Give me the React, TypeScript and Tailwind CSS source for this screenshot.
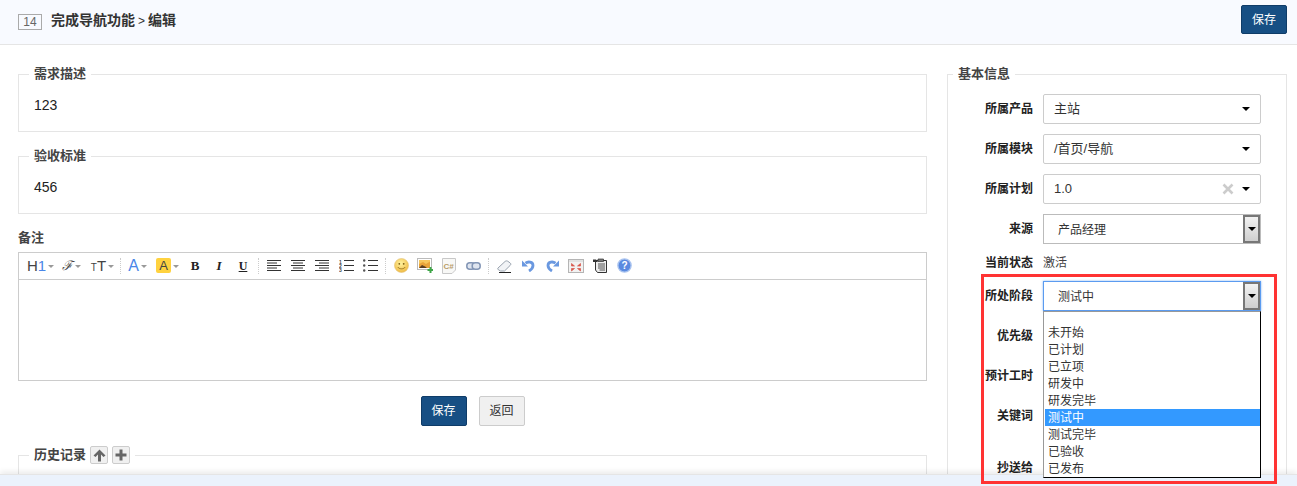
import React from 'react';

const stages = ['未开始', '已计划', '已立项', '研发中', '研发完毕', '测试中', '测试完毕', '已验收', '已发布'];

function Caret({ className = 'border-t-black' }: { className?: string }) {
    return <span className={`inline-block w-0 h-0 border-x-[4px] border-x-transparent border-t-[4px] ${className}`} />;
}

function MiniCaret() {
    return <span className="ml-[2px] mt-[2px] inline-block w-0 h-0 border-x-[3px] border-x-transparent border-t-[3px] border-t-[#999]" />;
}

function Sep({ narrow }: { narrow?: boolean }) {
    return <div className={`${narrow ? 'w-[5px]' : 'w-[7px]'} h-full flex justify-center items-center`}><div className="h-[16px] border-l border-dotted border-[#ccc]" /></div>;
}

function Tool({ children, className = 'w-[24px]' }: { children: React.ReactNode; className?: string }) {
    return <div className={`${className} h-full flex items-center justify-center`}>{children}</div>;
}

function Lines({ align }: { align: 'left' | 'center' | 'right' }) {
    const short = align === 'left' ? 'M0 3H10M0 8H10' : align === 'center' ? 'M2 3H12M2 8H12' : 'M4 3H14M4 8H14';
    return (
        <svg width="14" height="11" viewBox="0 0 14 11" stroke="#333" strokeWidth="1">
            <path d="M0 .5H14M0 5.5H14M0 10.5H14" />
            <path d={short} />
        </svg>
    );
}

function FormRow({ label, children, className = 'h-[30px] mb-[10px]' }: { label: string; children?: React.ReactNode; className?: string }) {
    return (
        <div className={`flex items-center ${className}`}>
            <div className="w-[85px] text-right text-[12px] font-bold text-[#222]">{label}</div>
            {children && <div className="ml-[10px] w-[218px] h-full">{children}</div>}
        </div>
    );
}

function SelectBox({ value, clearable }: { value: string; clearable?: boolean }) {
    return (
        <div className="h-full border border-[#ccc] rounded-[2px] flex items-center pl-[10px] pr-[10px] text-[13px] text-[#333]">
            <span className="flex-1">{value}</span>
            {clearable && (
                <svg width="12" height="12" viewBox="0 0 12 12" stroke="#ccc" strokeWidth="2.6" className="mr-[8px]">
                    <path d="M1.5 1.5L10.5 10.5M10.5 1.5L1.5 10.5" />
                </svg>
            )}
            <Caret />
        </div>
    );
}

function NativeSelect({ value, focused }: { value: string; focused?: boolean }) {
    return (
        <div className={`h-full flex items-center pl-[14px] text-[12px] text-[#333] bg-white border ${focused ? 'border-[#5b9bf0] shadow-[0_0_2px_rgba(80,150,240,0.7)]' : 'border-[#bbb]'}`}>
            <span className="flex-1 pt-[2px]">{value}</span>
            <div className="w-[17px] h-full border-2 border-[#777] bg-gradient-to-b from-[#f2f2f2] to-[#cfcfcf] flex items-center justify-center">
                <Caret />
            </div>
        </div>
    );
}

export default function App() {
    return (
        <div className="relative h-[486px] overflow-hidden bg-white text-[13px] text-[#333] font-['Liberation_Sans','Noto_Sans_CJK_SC',sans-serif]">
            <header className="h-[45px] bg-[#f8faff] border-b border-[#e5e5e5] pl-[18px] pr-[10px] flex items-center">
                <span className="w-[24px] h-[16px] border border-[#aaa] text-[12px] leading-[14px] text-center text-[#666]">14</span>
                <span className="ml-[9px] text-[14px] font-bold text-[#333] flex-1 mb-[3px] flex items-center">
                    完成导航功能<span className="mx-[3px] text-[12px] font-normal">&gt;</span>编辑
                </span>
                <button className="w-[46px] h-[29px] mb-[5px] bg-[#174f84] border border-[#0f3c68] rounded-[2px] text-[12px] text-white">保存</button>
            </header>

            <main className="flex pl-[18px] pr-[10px] pt-[20px]">
                <div className="w-[909px]">
                    <fieldset className="border border-[#e5e5e5]">
                        <legend className="ml-[10px] px-[5px] text-[13px] leading-[18px] font-bold text-[#444]">需求描述</legend>
                        <div className="h-[48px] pl-[15px] pt-[13px] text-[14px] leading-[18px] text-[#222]">123</div>
                    </fieldset>
                    <fieldset className="mt-[15px] border border-[#e5e5e5]">
                        <legend className="ml-[10px] px-[5px] text-[13px] leading-[18px] font-bold text-[#444]">验收标准</legend>
                        <div className="h-[48px] pl-[15px] pt-[13px] text-[14px] leading-[18px] text-[#222]">456</div>
                    </fieldset>

                    <div className="mt-[15px] mb-[5px] text-[13px] leading-[18px] font-bold text-[#444]">备注</div>
                    <div className="h-[129px] border border-[#ccc]">
                        <div className="h-[27px] pl-[6px] pb-[1px] border-b border-[#ccc] flex items-center text-[#444]">
                            <Tool className="w-[31px]"><span className="text-[15px] leading-none">H<span className="text-[#4a86e8]">1</span></span><MiniCaret /></Tool>
                            <Tool className="w-[31px]"><span className="text-[13px] leading-none italic font-['DejaVu_Serif',serif]">ℱ</span><MiniCaret /></Tool>
                            <Tool className="w-[31px]"><span className="text-[15px] leading-none"><span className="text-[10px]">T</span>T</span><MiniCaret /></Tool>
                            <Sep narrow />
                            <Tool className="w-[29px]"><span className="text-[16px] leading-none text-[#4a86e8]">A</span><MiniCaret /></Tool>
                            <Tool className="w-[31px]"><span className="w-[15px] h-[15px] rounded-[2px] bg-[#ffd23f] text-[13px] leading-[15px] text-center text-[#444]">A</span><MiniCaret /></Tool>
                            <Tool><span className="text-[13px] font-bold text-[#222] font-['Liberation_Serif',serif]">B</span></Tool>
                            <Tool><span className="text-[13px] font-bold italic text-[#222] font-['Liberation_Serif',serif]">I</span></Tool>
                            <Tool><span className="text-[12px] font-bold underline text-[#222] font-['Liberation_Serif',serif]">U</span></Tool>
                            <Sep />
                            <Tool><Lines align="left" /></Tool>
                            <Tool><Lines align="center" /></Tool>
                            <Tool><Lines align="right" /></Tool>
                            <Tool>
                                <svg width="15" height="13" viewBox="0 0 15 13">
                                    <path d="M5 1.5H15M5 6.5H15M5 11.5H15" stroke="#333" />
                                    <text x="0" y="4.5" fontSize="5" fontWeight="700" fill="#444" fontFamily="Liberation Sans">1</text>
                                    <text x="0" y="9" fontSize="5" fontWeight="700" fill="#444" fontFamily="Liberation Sans">2</text>
                                    <text x="0" y="13" fontSize="5" fontWeight="700" fill="#444" fontFamily="Liberation Sans">3</text>
                                </svg>
                            </Tool>
                            <Tool>
                                <svg width="15" height="13" viewBox="0 0 15 13">
                                    <path d="M5 1.5H15M5 6.5H15M5 11.5H15" stroke="#333" />
                                    <circle cx="1.2" cy="1.5" r="1.2" fill="#555" />
                                    <circle cx="1.2" cy="6.5" r="1.2" fill="#555" />
                                    <circle cx="1.2" cy="11.5" r="1.2" fill="#555" />
                                </svg>
                            </Tool>
                            <Sep />
                            <Tool>
                                <svg width="15" height="15" viewBox="0 0 15 15">
                                    <defs>
                                        <radialGradient id="smile" cx="0.45" cy="0.35" r="0.7">
                                            <stop offset="0" stopColor="#fff3a0" />
                                            <stop offset="1" stopColor="#eeb63c" />
                                        </radialGradient>
                                    </defs>
                                    <circle cx="7.5" cy="7.5" r="7" fill="url(#smile)" stroke="#e3c27a" strokeWidth="0.6" />
                                    <circle cx="5.3" cy="5.8" r="0.9" fill="#7a5a10" />
                                    <circle cx="9.7" cy="5.8" r="0.9" fill="#7a5a10" />
                                    <path d="M3.8 9C5 11.4 10 11.4 11.2 9" fill="none" stroke="#8a6414" strokeWidth="0.8" />
                                </svg>
                            </Tool>
                            <Tool>
                                <svg width="16" height="15" viewBox="0 0 16 15">
                                    <rect x="0.5" y="0.5" width="14" height="11" fill="#fff" stroke="#bbb" />
                                    <rect x="2" y="2" width="11" height="8" fill="#e8a33a" />
                                    <path d="M2 6L6 4L9 6L13 3.5V2H2Z" fill="#f6c65c" />
                                    <path d="M2 10L5 7L8 8.5L10 10Z" fill="#5a3d1e" />
                                    <path d="M10.5 11H12.5V9H14.5V11H16V13H14.5V15H12.5V13H10.5Z" fill="#3fa648" />
                                </svg>
                            </Tool>
                            <Tool>
                                <svg width="14" height="16" viewBox="0 0 14 16">
                                    <path d="M.5 .5H13.5V12L10 15.5H.5Z" fill="#f8f8f6" stroke="#c8c8c8" />
                                    <text x="1.5" y="10.5" fontSize="8" fontWeight="700" fill="#b89c68" fontFamily="Liberation Sans">C#</text>
                                </svg>
                            </Tool>
                            <Tool>
                                <svg width="15" height="8" viewBox="0 0 15 8" fill="#dfe5ef" stroke="#8295b5" strokeWidth="1.5">
                                    <rect x="0.8" y="0.8" width="8" height="6.4" rx="3" />
                                    <rect x="6.2" y="0.8" width="8" height="6.4" rx="3" />
                                </svg>
                            </Tool>
                            <Sep />
                            <Tool>
                                <svg width="15" height="14" viewBox="0 0 15 14">
                                    <path d="M1 9L8 2.5C9 1.7 10 1.7 11 2.4L13.2 4C14 4.7 14 5.6 13.2 6.4L7.5 12H3.5L1.2 10.6C.6 10.2 .6 9.5 1 9Z" fill="#f1f3f6" stroke="#8d97a5" strokeWidth="0.9" />
                                    <path d="M2 13.5H14" stroke="#222" strokeWidth="1" />
                                </svg>
                            </Tool>
                            <Tool>
                                <svg width="13" height="13" viewBox="0 0 13 13">
                                    <path d="M0 1.5V7.5H6Z" fill="#6a98e0" />
                                    <path d="M3.5 4.2C6 2.2 11 2.6 11 6.5C11 9 9.5 10.5 7 12" fill="none" stroke="#6a98e0" strokeWidth="2.8" />
                                </svg>
                            </Tool>
                            <Tool>
                                <svg width="13" height="13" viewBox="0 0 13 13">
                                    <path d="M13 1.5V7.5H7Z" fill="#6a98e0" />
                                    <path d="M9.5 4.2C7 2.2 2 2.6 2 6.5C2 9 3.5 10.5 6 12" fill="none" stroke="#6a98e0" strokeWidth="2.8" />
                                </svg>
                            </Tool>
                            <Tool>
                                <svg width="16" height="14" viewBox="0 0 16 14">
                                    <rect x="0.5" y="0.5" width="15" height="13" fill="#f2f2f2" stroke="#b5b5b5" />
                                    <path d="M1 1H15V3H1Z" fill="#e2e2e2" />
                                    <path d="M3.5 4.5L6.5 7H3.5ZM12.5 4.5L9.5 7H12.5ZM3.5 12L6.5 9.5H3.5ZM12.5 12L9.5 9.5H12.5Z" fill="#d8584c" stroke="#d8584c" strokeWidth="0.7" />
                                </svg>
                            </Tool>
                            <Tool>
                                <svg width="14" height="15" viewBox="0 0 14 15">
                                    <path d="M2.5 2.5H13.5V14.5H4.5L2.5 12Z" fill="#ececec" stroke="#333" />
                                    <path d="M0 1.5H3L5 4H0Z" fill="#333" />
                                    <path d="M5 1H10.5V3.5H5Z" fill="#777" stroke="#333" strokeWidth="0.7" />
                                    <path d="M5 6H12M5 8H12M5 10H12M6.5 12H12" stroke="#444" strokeWidth="0.9" />
                                </svg>
                            </Tool>
                            <Tool>
                                <svg width="15" height="15" viewBox="0 0 15 15">
                                    <circle cx="7.5" cy="7.5" r="6.6" fill="#5a8ae0" stroke="#a9c3ef" strokeWidth="1.4" />
                                    <text x="7.5" y="11.2" textAnchor="middle" fontSize="10" fontWeight="700" fill="#fff" fontFamily="Liberation Sans">?</text>
                                </svg>
                            </Tool>
                        </div>
                    </div>

                    <div className="mt-[15px] flex justify-center gap-[12px]">
                        <button className="w-[46px] h-[30px] bg-[#174f84] border border-[#0f3c68] rounded-[2px] text-[12px] text-white">保存</button>
                        <button className="w-[46px] h-[30px] bg-[#f0f0f0] border border-[#ccc] rounded-[2px] text-[12px] text-[#333]">返回</button>
                    </div>

                    <fieldset className="mt-[20px] border border-[#e5e5e5]">
                        <legend className="ml-[10px] px-[5px] flex items-center text-[13px] leading-[18px] font-bold text-[#444]">
                            历史记录
                            <span className="ml-[4px] w-[18px] h-[18px] border border-[#ccc] rounded-[2px] bg-[#f0f0f0] flex items-center justify-center">
                                <svg width="13" height="13" viewBox="0 0 13 13" fill="#666"><path d="M6.5 .5L12.5 6.5L10.5 8L8 5.6V12.5H5V5.6L2.5 8L.5 6.5Z" /></svg>
                            </span>
                            <span className="ml-[4px] w-[18px] h-[18px] border border-[#ccc] rounded-[2px] bg-[#f0f0f0] flex items-center justify-center">
                                <svg width="12" height="12" viewBox="0 0 12 12" fill="#666"><path d="M4.5 .5H7.5V4.5H11.5V7.5H7.5V11.5H4.5V7.5H.5V4.5H4.5Z" /></svg>
                            </span>
                        </legend>
                        <div className="h-[40px]" />
                    </fieldset>
                </div>

                <div className="ml-[20px] w-[340px]">
                    <fieldset className="border border-[#e5e5e5] h-[440px]">
                        <legend className="ml-[5px] px-[5px] text-[13px] leading-[18px] font-bold text-[#444]">基本信息</legend>
                        <div className="pt-[11px]">
                            <FormRow label="所属产品"><SelectBox value="主站" /></FormRow>
                            <FormRow label="所属模块"><SelectBox value="/首页/导航" /></FormRow>
                            <FormRow label="所属计划"><SelectBox value="1.0" clearable /></FormRow>
                            <FormRow label="来源"><NativeSelect value="产品经理" /></FormRow>
                            <FormRow label="当前状态" className="h-[18px] mb-[9px]">
                                <div className="text-[12px] leading-[18px] text-[#444]">激活</div>
                            </FormRow>
                            <FormRow label="所处阶段"><NativeSelect value="测试中" focused /></FormRow>
                            <FormRow label="优先级" />
                            <FormRow label="预计工时" />
                            <FormRow label="关键词" className="h-[30px] mb-[22px]" />
                            <FormRow label="抄送给" />
                        </div>
                    </fieldset>
                </div>
            </main>

            <div className="absolute left-0 right-0 bottom-0 h-[12px] bg-[#ebf2fc] border-t border-[#e5e5e5] shadow-[0_-3px_5px_rgba(0,0,0,0.07)]" />

            {/* open option list of 所处阶段 */}
            <div className="absolute left-[1043px] top-[311px] w-[218px] h-[167px] bg-white border border-t-[#999] border-l-[#999] border-r-black border-b-black pt-[12px] pl-[1px] text-[12px] leading-[17px] text-[#333]">
                {stages.map((stage) => (
                    <div key={stage} className={`h-[17px] pl-[3px] flex items-center ${stage === '测试中' ? 'bg-[#3399ff] text-white' : ''}`}><span className="pt-[2px]">{stage}</span></div>
                ))}
            </div>

            {/* annotation box */}
            <div className="absolute left-[981px] top-[274px] w-[296px] h-[210px] border-[3px] border-[#ff3333] pointer-events-none" />
        </div>
    );
}
